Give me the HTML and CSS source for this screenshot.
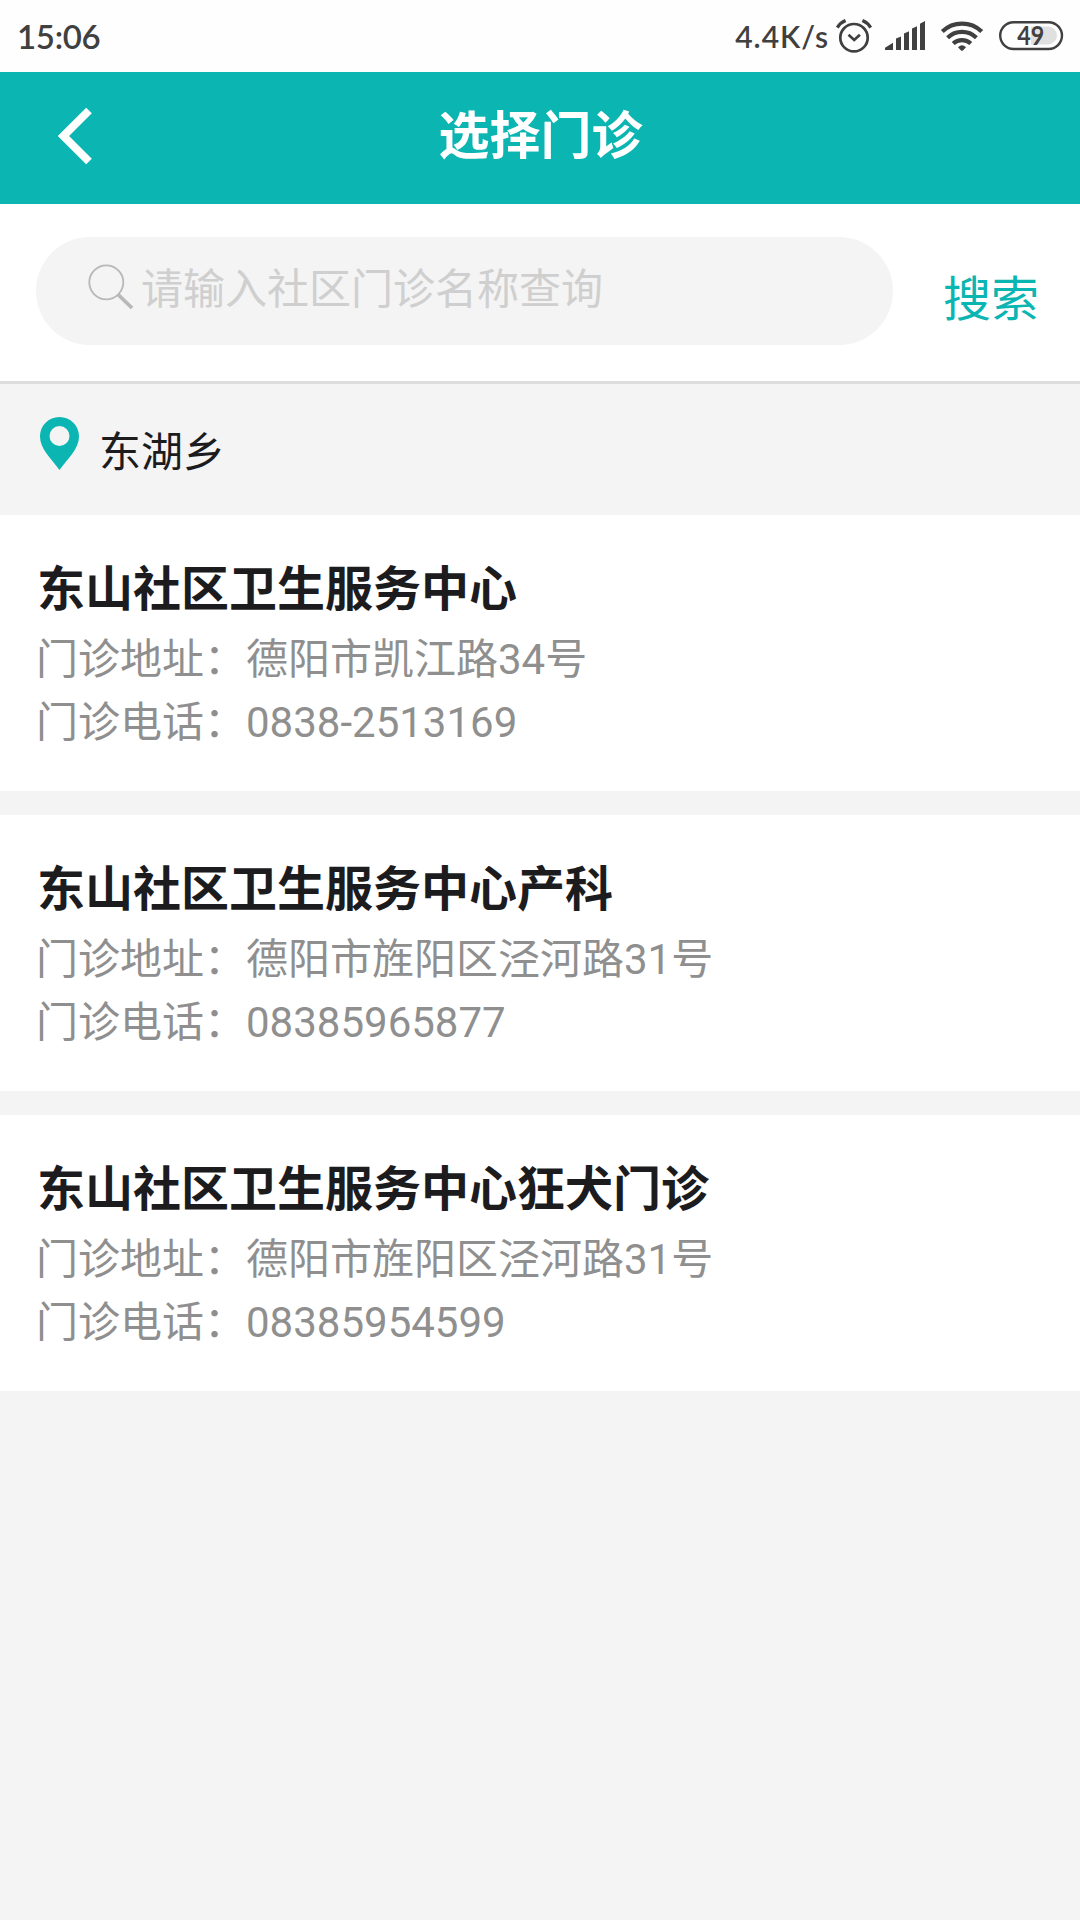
FILE: index.html
```html
<!DOCTYPE html>
<html lang="zh-CN">
<head>
    <meta charset="UTF-8">
    <meta name="viewport" content="width=device-width, initial-scale=1.0">
    <title>选择门诊</title>
    <link rel="stylesheet" href="styles.css">
</head>
<body>

    <div class="status-bar">
        <span class="time">15:06</span>
        <div class="status-right">
            <span class="speed">4.4K/s</span>
            <svg class="status-icons" width="250" height="72" viewBox="830 0 250 72">
                <!-- alarm -->
                <g fill="none" stroke="#404040" stroke-width="2.7">
                    <circle cx="854" cy="37.7" r="13.7"/>
                    <path d="M848.5 34.7l5.700 5.200 5.700-5.200"/>
                    <path stroke-width="3.200" d="M837.300 27.600q3-4.800 8.300-7M870.700 27.600q-3-4.800-8.300-7"/>
                </g>
                <!-- signal -->
                <path fill="#404040" d="M893 42.8V50h-8v-2.3zM896 38.6l5-2.2V50h-5zM904 33.6l5-2.4V50h-5zM912 28.6l5-2.4V50h-5zM920 23.8l5-2.8V50h-5z"/>
                <!-- wifi -->
                <g fill="none" stroke="#404040" stroke-width="4.200">
                    <path d="M942.3 31.500a28.500 28.500 0 0 1 39.400 0"/>
                    <path d="M947.6 37.800a20.700 20.700 0 0 1 28.800 0"/>
                    <path d="M953.2 43.600a12.700 12.700 0 0 1 17.600 0"/>
                </g>
                <path fill="#404040" d="M958 47.300q4-4 8 0l-2.800 3q-1.200 1-2.400 0z"/>
                <!-- battery -->
                <path fill="#e0e0e0" d="M1031 26.5h17a9 9 0 0 1 0 18h-17z"/>
                <rect x="1000.2" y="22.2" width="61.8" height="26.8" rx="13.4" fill="none" stroke="#404040" stroke-width="2.4"/>
                <text class="battery-text" x="1017.300" y="45" textLength="27" lengthAdjust="spacingAndGlyphs">49</text>
            </svg>
        </div>
    </div>

    <div class="header">
        <svg class="back" width="36" height="58" viewBox="0 0 36 58">
            <path fill="none" stroke="#fff" stroke-width="8" d="M31 3.500L5.500 29 31 54.500"/>
        </svg>
        <h1>选择门诊</h1>
    </div>

    <div class="search-bar">
        <div class="search-input">
            <svg width="46" height="46" viewBox="0 0 46 46">
                <circle cx="18.300" cy="18.300" r="17" fill="none" stroke="#b8b8b8" stroke-width="1.800"/>
                <path stroke="#b8b8b8" stroke-width="3.800" d="M30 30.500L44 44"/>
            </svg>
            <span>请输入社区门诊名称查询</span>
        </div>
        <a class="search-btn">搜索</a>
    </div>

    <div class="location">
        <svg width="39" height="53" viewBox="0 0 39 53">
            <path fill="#0ab5b2" fill-rule="evenodd" d="M19.500 0C8.500 0 0 8.500 0 19.500 0 32 11 41 19.500 53 28 41 39 32 39 19.500 39 8.500 30.500 0 19.500 0zM19.500 9a10 10 0 1 1 0 20 10 10 0 0 1 0-20z"/>
        </svg>
        <span>东湖乡</span>
    </div>

    <div class="list">
        <div class="card">
            <h2>东山社区卫生服务中心</h2>
            <p>门诊地址：德阳市凯江路34号</p>
            <p>门诊电话：0838-2513169</p>
        </div>
        <div class="card">
            <h2>东山社区卫生服务中心产科</h2>
            <p>门诊地址：德阳市旌阳区泾河路31号</p>
            <p>门诊电话：08385965877</p>
        </div>
        <div class="card">
            <h2>东山社区卫生服务中心狂犬门诊</h2>
            <p>门诊地址：德阳市旌阳区泾河路31号</p>
            <p>门诊电话：08385954599</p>
        </div>
    </div>

</body>
</html>
```
FILE: styles.css
```css
* {
    box-sizing: border-box;
}

body {
    font-family: Roboto, "Noto Sans CJK SC", sans-serif;
    margin: 0;
    min-height: 1920px;
    background-color: #f4f4f4;
    color: #1c1c1e;
}

h1, h2, p {
    margin: 0;
}

svg {
    display: block;
    flex: none;
}

.status-bar {
    display: flex;
    justify-content: space-between;
    height: 72px;
    background-color: #fefefe;
    color: #404040;
    font-family: Lato, sans-serif;
    font-weight: 600;
    line-height: 73px;
}

.time {
    padding-left: 17px;
    font-size: 33px;
    letter-spacing: -0.3px;
}

.status-right {
    display: flex;
}

.speed {
    margin-right: 1px;
    font-size: 30px;
    letter-spacing: 1px;
}

.battery-text {
    font-size: 27px;
    font-weight: 700;
    fill: #404040;
}

.header {
    display: grid;
    grid-template-columns: 140px 1fr 140px;
    align-items: center;
    height: 132px;
    padding-bottom: 5px;
    background-color: #0ab5b2;
    color: #fff;
}

.back {
    margin-left: 58px;
}

.header h1 {
    padding: 2px 0 0 1px;
    font-size: 51px;
    font-weight: 700;
    line-height: 76px;
    text-align: center;
}

.search-bar {
    display: flex;
    height: 180px;
    padding: 33px 36px 0;
    background-color: #fff;
    border-bottom: 3px solid #ddd;
}

.search-input {
    display: flex;
    width: 857px;
    height: 108px;
    padding: 27px 0 0 52px;
    border-radius: 54px;
    background-color: #f4f4f4;
    color: #cfcfcf;
    font-size: 42px;
}

.search-input span {
    margin-left: 7px;
    padding-top: 1px;
    line-height: 50px;
}

.search-btn {
    margin-left: 50px;
    padding-top: 27px;
    color: #0ab5b2;
    font-size: 48px;
    line-height: 72px;
}

.location {
    display: flex;
    height: 131px;
    padding: 33px 40px 0;
    font-size: 42px;
}

.location span {
    margin-left: 20px;
    padding-top: 4px;
    line-height: 63px;
}

.list {
    display: flex;
    flex-direction: column;
    gap: 24px;
}

.card {
    height: 276px;
    padding: 39px 36px 0;
    background-color: #fff;
}

.card h2 {
    margin-bottom: 2px;
    padding-left: 1px;
    font-size: 48px;
    font-weight: 700;
    line-height: 72px;
}

.card p {
    color: #8f8f8f;
    font-size: 42px;
    line-height: 63px;
}
```
